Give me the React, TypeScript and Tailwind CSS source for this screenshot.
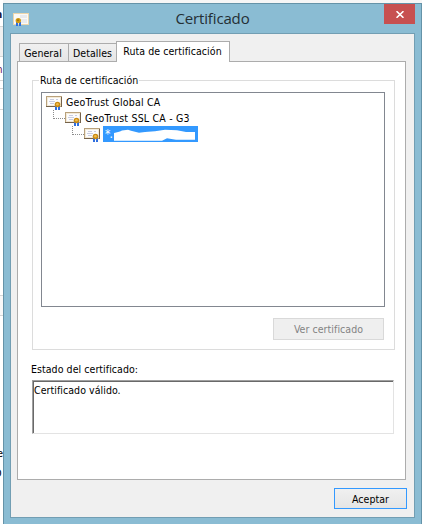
import React from "react";

const TREE = [
  { label: "GeoTrust Global CA", indent: "pl-[4px]", connector: false },
  { label: "GeoTrust SSL CA - G3", indent: "pl-[11px]", connector: true },
];

function CertIcon() {
  return (
    <svg width="16" height="16" viewBox="0 0 16 16" className="shrink-0">
      <g shapeRendering="crispEdges">
        <rect x="0" y="2" width="16" height="11" fill="#b8a17c" />
        <rect x="1" y="3" width="14" height="9" fill="#f3ead8" />
        <rect x="2" y="4" width="12" height="7" fill="#fcfcfd" />
        <path d="M0 12h9v1H0zM15 3h1v10h-1z" fill="#75624a" />
        <path d="M4 5h4v1H4zM10 5h2v1h-2zM3 7h6v1H3zM4 9h4v1H4z" fill="#c9cde0" />
        <path d="M9 12h2v4H9zM12 12h2v4h-2z" fill="#2f6fe0" />
      </g>
      <circle cx="11.5" cy="10.5" r="2.8" fill="#c98a14" />
      <circle cx="11.4" cy="10.2" r="1.3" fill="#f0bd4c" />
    </svg>
  );
}

function TitleIcon() {
  return (
    <svg width="17" height="14" viewBox="0 0 17 14" className="shrink-0">
      <rect x="0.5" y="0.5" width="15" height="11" fill="#fbfaf6" stroke="#ecd6ac" />
      <path d="M7 2h3v3H7zM10 2h4v3h-4zM8 6h6v4H8z" fill="#e9ebee" />
      <path d="M3 9h2v4H3zM6 9h2v4H6z" fill="#2f6fe0" />
      <circle cx="5.3" cy="7.6" r="2.7" fill="#d09a12" />
      <circle cx="5" cy="7.3" r="1" fill="#a87208" />
    </svg>
  );
}

function Connector() {
  return <div className="h-[9px] w-[12px] shrink-0 self-start border-b border-l border-dotted border-[#8c8c8c]" />;
}

// Sliver of the page left of the dialog
function Backdrop() {
  return (
    <div className="flex w-[3px] shrink-0 flex-col overflow-hidden bg-white text-[11px] leading-[14px]">
      <div className="h-[26px] pt-[8px] font-bold"><span className="-ml-[8px] text-[#201838]">m</span></div>
      <div className="h-[31px] border-y border-[#d5d5d5] bg-[#f0f0f0]" />
      <div className="h-[23px] pt-[6px]"><span className="-ml-[7px] text-[#682058]">m</span></div>
      <div className="h-[9px] border-y border-[#d5d5d5]" />
      <div className="h-[207px] border-b border-[#d5d5d5] pt-[20px]"><div className="h-px bg-[#d5d5d5]" /></div>
      <div className="h-[20px] border-b border-[#d5d5d5] bg-[#f8f8f8]" />
      <div className="pt-[131px]"><span className="-ml-[3px]">e</span></div>
      <div className="pt-[6px]"><span className="-ml-[6px]">D</span></div>
    </div>
  );
}

export default function App() {
  return (
    <div className="flex h-[524px] w-[422px] overflow-hidden bg-[#f6f6f6] font-['DejaVu_Sans_Condensed','DejaVu_Sans',sans-serif] text-[10.5px] leading-[14px] tracking-[0.06px] text-black [font-stretch:condensed]">
      <Backdrop />
      <div className="mt-[3px] flex h-[521px] w-[419px] flex-col border-x border-t border-[#6593a8] bg-[#8abcd3] pl-[6px]">
        <header className="flex h-[29px] shrink-0">
          <div className="pl-[3px] pt-[9px]"><TitleIcon /></div>
          <h1 className="w-[354px] pl-[11px] pt-[3px] text-center font-['Open_Sans',sans-serif] text-[15px] leading-[22px] tracking-[-0.15px] text-[#242f35] [font-stretch:normal]">
            Certificado
          </h1>
          <button className="flex h-[20px] w-[31px] shrink-0 items-center justify-center bg-[#c75050]">
            <svg width="8" height="7" viewBox="0 0 8 7"><path d="M0.5 0.2L7.5 6.8M7.5 0.2L0.5 6.8" stroke="white" strokeWidth="1.6" /></svg>
          </button>
        </header>

        <main className="flex h-[485px] w-[405px] flex-col border border-[#729eb3] bg-[#f0f0f0] pl-[6px] pt-[7px]">
          <nav className="flex h-[21px] items-end pl-[2px]">
            <button className="h-[19px] w-[50px] border border-b-0 border-[#acacac] bg-linear-to-b from-[#f0f0f0] to-[#e5e5e5] pr-[2px]">General</button>
            <button className="h-[19px] w-[48px] border-t border-[#acacac] bg-linear-to-b from-[#f0f0f0] to-[#e5e5e5] pr-px">Detalles</button>
            <button className="z-10 -ml-px h-[21px] w-[114px] self-start border border-b-0 border-[#acacac] bg-white pb-[2px] pr-px">Ruta de certificación</button>
          </nav>

          <section className="-mt-px h-[419px] w-[389px] border border-[#acacac] bg-white pl-[14px] pt-[11px]">
            <fieldset className="h-[276px] w-[363px]">
              <div className="flex h-[14px] items-center">
                <div className="h-px w-[7px] bg-[#dcdcdc]" />
                <span className="px-px">Ruta de certificación</span>
                <div className="h-px flex-1 bg-[#dcdcdc]" />
              </div>
              <div className="-mt-[7px] h-[270px] border-x border-b border-[#dcdcdc] px-[8px] pt-[12px]">
                <div className="h-[215px] w-[344px] border border-[#828790] pt-px">
                  {TREE.map((node) => (
                    <div key={node.label} className={`flex h-[16px] items-center ${node.indent}`}>
                      {node.connector && <Connector />}
                      <CertIcon />
                      <span className="whitespace-nowrap pl-[4px] tracking-[0.2px]">{node.label}</span>
                    </div>
                  ))}
                  <div className="flex h-[16px] items-center pl-[30px]">
                    <Connector />
                    <CertIcon />
                    <div className="ml-[3px] flex h-[16px] w-[95px] bg-[#3399ff] pl-[2px] text-white">
                      <span className="w-[8px] text-[12px] leading-[16px] tracking-[-0.8px]">*.</span>
                      <svg width="85" height="16" viewBox="0 0 85 16">
                        <path d="M1 7l6-1.5 2-1 6-.8 3 1 8 2 6-.7 10-.7 10-1.6 12 .6 9 1.7h9v7.7H63l-9-1.4-5 2.4H1z" fill="white" />
                      </svg>
                    </div>
                  </div>
                </div>
                <div className="flex justify-end pr-[2px] pt-[11px]">
                  <button className="h-[22px] w-[111px] border border-[#d9d9d9] bg-[#efefef] text-[#838383]">Ver certificado</button>
                </div>
              </div>
            </fieldset>

            <div className="-ml-px h-[31px] pt-[13px] tracking-[0.06px]">Estado del certificado:</div>
            <div className="h-[54px] w-[362px] border border-b-[#e3e3e3] border-l-[#a0a0a0] border-r-[#e3e3e3] border-t-[#a0a0a0]">
              <div className="h-full border-l border-t border-[#696969] pt-px tracking-[0.06px]">Certificado válido.</div>
            </div>
          </section>

          <footer className="flex justify-end pr-[7px] pt-[8px]">
            <button className="h-[21px] w-[73px] border border-[#3399ff] bg-linear-to-b from-[#f0f0f0] to-[#e5e5e5]">Aceptar</button>
          </footer>
        </main>
      </div>
    </div>
  );
}
